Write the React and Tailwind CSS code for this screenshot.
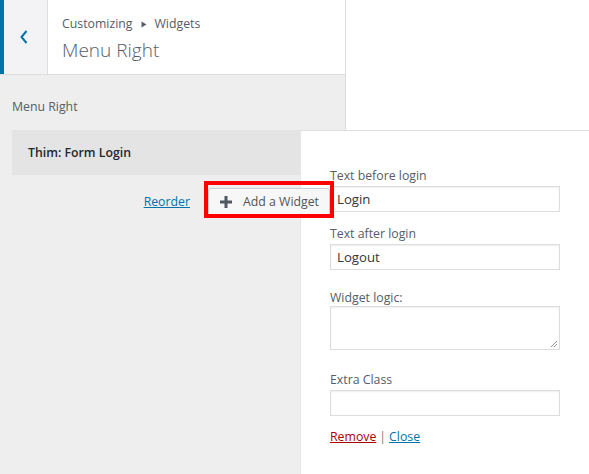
import React from 'react';

const font = { fontFamily: '"Open Sans", "Noto Sans", sans-serif' };

function Field({ label, value, className = '' }) {
    return (
        <div className={className}>
            <label className="block pt-[1px] text-[12.3px] leading-[18px] text-[#555d66]">{label}</label>
            <div className="mt-[1px] h-[26px] w-[230px] border border-[#ddd] bg-white px-[6px] text-[13.2px] leading-[24px] text-[#32373c] shadow-[inset_0_1px_2px_rgba(0,0,0,0.07)]">
                {value}
            </div>
        </div>
    );
}

export default function App() {
    return (
        <div className="w-[589px] h-[474px] bg-white overflow-hidden" style={font}>
            <div className="w-[346px] h-full bg-[#eeeeee] border-r border-[#dddddd]">

                {/* ── HEADER ─────────────────────────────────────── */}
                <div className="flex h-[75px] bg-white border-b border-[#dddddd]">
                    <div className="w-[48px] h-full bg-[#f3f3f5] border-l-4 border-[#0073aa] border-r border-r-[#dddddd] flex items-center justify-center">
                        <svg width="10" height="16" viewBox="0 0 10 16" className="ml-[-4px] mt-[-1px]">
                            <path d="M7.5 2 L2.5 8 L7.5 14" fill="none" stroke="#0073aa" strokeWidth="2" />
                        </svg>
                    </div>
                    <div className="pl-[14px] pt-[14px]">
                        <div className="flex items-center text-[12.3px] leading-[20px] text-[#555d66]">
                            <span>Customizing</span>
                            <svg width="6" height="7" viewBox="0 0 6 7" className="mx-[8px]">
                                <path d="M0.5 0.5 L5.5 3.5 L0.5 6.5 Z" fill="#555d66" />
                            </svg>
                            <span>Widgets</span>
                        </div>
                        <div className="text-[19px] leading-[28px] font-light text-[#555d66] mt-[2px]">Menu Right</div>
                    </div>
                </div>

                <div className="pl-[12px] pt-[23px] text-[12.3px] leading-[18px] text-[#555d66]">Menu Right</div>

                {/* ── WIDGET ─────────────────────────────────────── */}
                <div className="flex ml-[12px] mt-[14px] w-[577px]">
                    <div className="w-[288px] shrink-0">
                        <div className="h-[45px] bg-[#e4e4e4] pl-[16px] pt-[2px] flex items-center text-[12.3px] font-semibold text-[#23282d]">
                            Thim: Form Login
                        </div>
                        <div className="flex items-center justify-end mt-[13px] mr-[-30px] relative z-10">
                            <span className="text-[12.3px] text-[#0073aa] underline">Reorder</span>
                            <div className="relative ml-[18px]">
                                <div className="h-[28px] w-[122px] bg-[#f7f7f7] border border-[#cccccc] rounded-[3px] flex items-center pl-[10px] text-[12.3px] text-[#555555]">
                                    <svg width="14" height="14" viewBox="0 0 14 14" className="mr-[10px]">
                                        <path d="M7 1 V13 M1 7 H13" stroke="#50575e" strokeWidth="3" />
                                    </svg>
                                    Add a Widget
                                </div>
                                <div className="absolute left-[-4px] right-[-4px] top-[-7px] bottom-[-2px] border-4 border-[#ff0000]"></div>
                            </div>
                        </div>
                    </div>

                    <div className="w-[289px] shrink-0 h-[344px] bg-white border-t border-[#dddddd] border-l border-l-[#e6e6e6] pl-[29px] pt-[35px]">
                        <Field label="Text before login" value="Login" />
                        <Field label="Text after login" value="Logout" className="mt-[12px]" />
                        <div className="mt-[18px]">
                            <label className="block pt-[1px] text-[12.3px] leading-[17px] text-[#555d66]">Widget logic:</label>
                            <div className="relative h-[44px] w-[230px] border border-[#ddd] bg-white shadow-[inset_0_1px_2px_rgba(0,0,0,0.07)]">
                                <svg width="8" height="8" viewBox="0 0 8 8" className="absolute right-[1px] bottom-[1px]">
                                    <path d="M7 1 L1 7 M7 4 L4 7" stroke="#777" strokeWidth="0.8" />
                                </svg>
                            </div>
                        </div>
                        <Field label="Extra Class" value="" className="mt-[20px]" />
                        <div className="mt-[12px] text-[12.3px] leading-[18px] text-[#777]">
                            <span className="text-[#a00] underline">Remove</span>
                            <span className="mx-[3px]">|</span>
                            <span className="text-[#0073aa] underline">Close</span>
                        </div>
                    </div>
                </div>
            </div>
        </div>
    );
}
